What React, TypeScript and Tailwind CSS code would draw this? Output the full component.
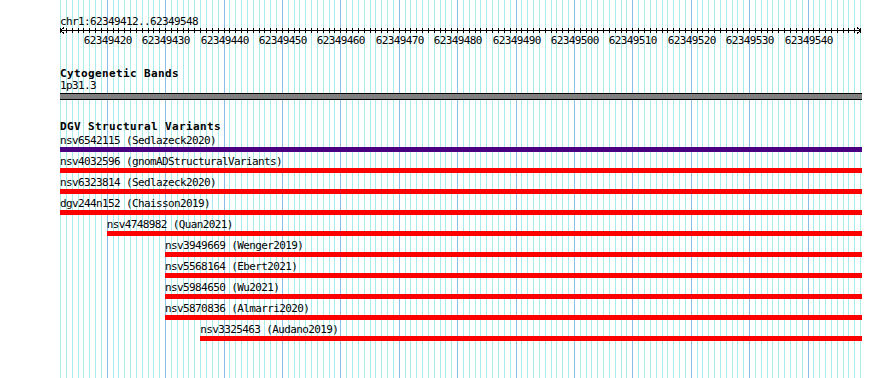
import React from 'react';

const START = 62349412;
const END = 62349548;
const ORIGIN = 60;
const PX = 5.84;

const bx = (pos: number) => ORIGIN + (pos - START) * PX;

type Variant = { id: string; study: string; start: number; color: string };

const variants: Variant[] = [
  { id: 'nsv6542115', study: 'Sedlazeck2020', start: 62349412, color: 'bg-[#4b0082]' },
  { id: 'nsv4032596', study: 'gnomADStructuralVariants', start: 62349412, color: 'bg-[#ff0000]' },
  { id: 'nsv6323814', study: 'Sedlazeck2020', start: 62349412, color: 'bg-[#ff0000]' },
  { id: 'dgv244n152', study: 'Chaisson2019', start: 62349412, color: 'bg-[#ff0000]' },
  { id: 'nsv4748982', study: 'Quan2021', start: 62349420, color: 'bg-[#ff0000]' },
  { id: 'nsv3949669', study: 'Wenger2019', start: 62349430, color: 'bg-[#ff0000]' },
  { id: 'nsv5568164', study: 'Ebert2021', start: 62349430, color: 'bg-[#ff0000]' },
  { id: 'nsv5984650', study: 'Wu2021', start: 62349430, color: 'bg-[#ff0000]' },
  { id: 'nsv5870836', study: 'Almarri2020', start: 62349430, color: 'bg-[#ff0000]' },
  { id: 'nsv3325463', study: 'Audano2019', start: 62349436, color: 'bg-[#ff0000]' },
];

// vertical base grid behind the tracks
function Grid() {
  const lines = [];
  for (let k = 0; k <= END - START + 1; k++) {
    const x = Math.round(ORIGIN + k * PX) + 0.5;
    const major = (START + k) % 10 === 0;
    lines.push(
      <line key={k} x1={x} x2={x} y1={0} y2={378} stroke={major ? '#88c0ea' : '#a8ecec'} strokeWidth={1} />
    );
  }
  return (
    <svg className="absolute inset-0 pointer-events-none" width={890} height={378} shapeRendering="crispEdges">
      {lines}
    </svg>
  );
}

function Ruler() {
  const ticks = [];
  const labels = [];
  for (let k = 0; k <= END - START + 1; k++) {
    const x = Math.round(ORIGIN + k * PX) + 0.5;
    ticks.push(<line key={k} x1={x} x2={x} y1={1} y2={6} stroke="#000" />);
    if ((START + k) % 10 === 0) {
      labels.push(
        <text key={k} x={x + 0.3} y={17} textAnchor="middle" fontSize={11} letterSpacing={-0.62} fill="#000">
          {START + k}
        </text>
      );
    }
  }
  return (
    <svg className="block" width={890} height={20} shapeRendering="crispEdges">
      <line x1={60} x2={861} y1={3.5} y2={3.5} stroke="#000" />
      <polyline points="64,0.5 60.5,3.5 64,6.5" fill="none" stroke="#000" />
      <polyline points="857,0.5 860.5,3.5 857,6.5" fill="none" stroke="#000" />
      {ticks}
      <g shapeRendering="auto">{labels}</g>
    </svg>
  );
}

function VariantRow({ v }: { v: Variant }) {
  const left = bx(v.start);
  return (
    <div className="mt-[5px] first:mt-[4px]">
      <div className="h-[10px] leading-[10px] whitespace-pre" style={{ paddingLeft: left }}>
        {v.id} ({v.study})
      </div>
      <div className="mt-[1px] h-[5px] flex">
        <div className={`h-[5px] ${v.color}`} style={{ marginLeft: left, width: 862 - left }} />
      </div>
    </div>
  );
}

export default function App() {
  return (
    <div className="relative w-[890px] h-[378px] overflow-hidden bg-white text-black text-[11px] tracking-[-0.62px] font-['DejaVu_Sans_Mono',monospace]">
      <Grid />
      <div className="relative">
        <div className="pt-[17px] pl-[60px] h-[27px] leading-[10px]">chr1:62349412..62349548</div>
        <Ruler />

        {/* cytogenetic bands */}
        <div className="mt-[22px] pl-[60px] h-[10px] leading-[10px] font-bold tracking-[0.38px]">Cytogenetic Bands</div>
        <div className="mt-[2px] pl-[60px] h-[10px] leading-[10px]">1p31.3</div>
        <div className="mt-[2px] ml-[60px] w-[802px] h-[7px] border-y border-black bg-[#808080]" />

        {/* DGV structural variants */}
        <div className="mt-[22px] pl-[60px] h-[10px] leading-[10px] font-bold tracking-[0.38px]">DGV Structural Variants</div>
        <div>
          {variants.map((v) => (
            <VariantRow key={v.id} v={v} />
          ))}
        </div>
      </div>
    </div>
  );
}
